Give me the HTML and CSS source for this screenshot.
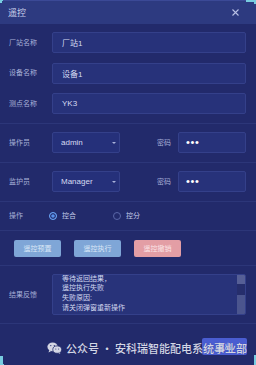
FILE: index.html
```html
<!DOCTYPE html>
<html lang="zh-CN">
<head>
<meta charset="utf-8">
<title>遥控</title>
<link rel="stylesheet" href="styles.css">
</head>
<body>
<div class="dialog">
  <div class="header">
    <span class="title">遥控</span>
    <svg class="close" width="7" height="7" viewBox="0 0 7 7"><path d="M0.5 0.5L6.5 6.5M6.5 0.5L0.5 6.5" stroke="#b9c0e4" stroke-width="1.1" fill="none"/></svg>
  </div>

  <div class="section basic">
    <div class="row"><span class="label">厂站名称</span><div class="input">厂站1</div></div>
    <div class="row"><span class="label">设备名称</span><div class="input">设备1</div></div>
    <div class="row"><span class="label">测点名称</span><div class="input">YK3</div></div>
  </div>

  <div class="section user">
    <span class="label">操作员</span>
    <div class="select">admin<span class="caret"></span></div>
    <span class="label pw-label">密码</span>
    <div class="input pw"><span class="dots">•••</span></div>
  </div>

  <div class="section user">
    <span class="label">监护员</span>
    <div class="select">Manager<span class="caret"></span></div>
    <span class="label pw-label">密码</span>
    <div class="input pw"><span class="dots">•••</span></div>
  </div>

  <div class="section op">
    <span class="label op-label">操作</span>
    <span class="radio checked"></span><span class="radio-text">控合</span>
    <span class="radio"></span><span class="radio-text">控分</span>
  </div>

  <div class="section actions">
    <button class="btn btn-blue">遥控预置</button>
    <button class="btn btn-blue">遥控执行</button>
    <button class="btn btn-red">遥控撤销</button>
  </div>

  <div class="section feedback">
    <span class="label">结果反馈</span>
    <div class="ta">
      <div class="ta-text">
        <div class="ta-lines">
          <p>等待返回结果，</p>
          <p>遥控执行失败</p>
          <p>失败原因:</p>
          <p>请关闭弹窗重新操作</p>
        </div>
      </div>
      <div class="sb"><i class="sb-up"></i><i class="sb-track"></i><i class="sb-thumb"></i></div>
    </div>
  </div>

  <div class="footer">
    <button class="btn btn-exit">退出</button>
  </div>

  <div class="watermark">
    <svg class="wx" width="15" height="12" viewBox="0 0 15 12">
      <ellipse cx="5.6" cy="4.8" rx="5.2" ry="4.4" fill="#d4d6e4"/>
      <path d="M2.2 8L1.6 10.4L4.2 9Z" fill="#d4d6e4"/>
      <ellipse cx="10.2" cy="7.6" rx="4.4" ry="3.7" fill="#d4d6e4" stroke="#262e6e" stroke-width="0.8"/>
      <path d="M12.6 10.6L13.4 12L11.4 11.1Z" fill="#d4d6e4"/>
      <circle cx="3.8" cy="3.6" r="0.65" fill="#262e6e"/>
      <circle cx="7.3" cy="3.6" r="0.65" fill="#262e6e"/>
      <circle cx="8.8" cy="7" r="0.5" fill="#262e6e"/>
      <circle cx="11.6" cy="7" r="0.5" fill="#262e6e"/>
    </svg>
    <span class="wm-text">公众号 · 安科瑞智能配电系统事业部</span>
  </div>

  <span class="corner tl"></span>
  <span class="corner tr"></span>
  <span class="corner bl"></span>
  <span class="corner br"></span>
</div>
</body>
</html>
```
FILE: styles.css
```css
* { box-sizing: border-box; margin: 0; padding: 0; }

body {
  margin: 0;
  width: 256px;
  height: 365px;
  overflow: hidden;
  background: #222a6b;
  font-family: "Liberation Sans", "Noto Sans CJK SC", sans-serif;
}

.dialog {
  position: relative;
  width: 256px;
  height: 365px;
  background: #222a6b;
  display: flex;
  flex-direction: column;
}

.header {
  height: 24px;
  flex: none;
  border-top: 1px solid #3b4996;
  background: #2d3a80;
  display: flex;
  align-items: center;
  justify-content: space-between;
  padding: 0 17px 0 8px;
}

.title {
  font-size: 9px;
  line-height: 12px;
  color: #c9cee9;
}

.close { display: block; }

.section {
  flex: none;
  border-bottom: 1px solid #2c3679;
  padding: 0 10px 0 9px;
}

.basic {
  padding-top: 8px;
  padding-bottom: 9px;
  display: flex;
  flex-direction: column;
  gap: 9.5px;
}

.row {
  display: flex;
  align-items: center;
}

.label {
  flex: none;
  width: 43px;
  font-size: 7px;
  line-height: 10px;
  color: #a8b0d8;
}

.input {
  flex: 1;
  height: 21px;
  background: #27327a;
  border: 1px solid #34408a;
  border-radius: 2px;
  padding-left: 9px;
  font-size: 8px;
  color: #d6dbf2;
  display: flex;
  align-items: center;
}

.user {
  display: flex;
  align-items: center;
  padding-top: 8px;
  padding-bottom: 9px;
}

.select {
  flex: none;
  width: 68px;
  height: 21px;
  background: #25307a;
  border: 1px solid #34408a;
  border-radius: 2px;
  padding: 0 3px 0 8px;
  font-size: 8px;
  color: #d6dbf2;
  display: flex;
  align-items: center;
}

.caret {
  margin-left: auto;
  width: 0;
  height: 0;
  border-left: 2.5px solid transparent;
  border-right: 2.5px solid transparent;
  border-top: 2.5px solid #aab2da;
}

.pw-label {
  width: 21px;
  margin-left: 37px;
}

.pw {
  flex: none;
  width: 68px;
  padding-left: 7px;
}

.dots {
  font-family: "Liberation Sans", sans-serif;
  font-size: 11px;
  line-height: 11px;
  letter-spacing: 0.6px;
  color: #ffffff;
}

.op {
  height: 29px;
  display: flex;
  align-items: center;
}

.op-label { width: 40px; }

.radio {
  flex: none;
  width: 8px;
  height: 8px;
  border-radius: 50%;
  border: 1px solid #5a67a8;
  margin-right: 5px;
}

.radio.checked {
  border-color: #6aa2f2;
  background: #5890ea;
  box-shadow: inset 0 0 0 1.2px #222a6b;
}

.radio-text {
  font-size: 7px;
  line-height: 10px;
  color: #c4cae8;
  width: 14px;
  margin-right: 37px;
}

.actions {
  display: flex;
  gap: 13px;
  padding: 9px 10px 8px 14px;
}

.btn {
  flex: none;
  width: 47px;
  height: 17px;
  border: none;
  border-radius: 2px;
  font-family: "Liberation Sans", "Noto Sans CJK SC", sans-serif;
  font-size: 7px;
  line-height: 10px;
  display: flex;
  align-items: center;
  justify-content: center;
}

.btn-blue {
  background: #7fa6d7;
  color: #d9e6f6;
}

.btn-red {
  background: #e39ea5;
  color: #fbe4e6;
}

.feedback {
  display: flex;
  align-items: center;
  padding-top: 8px;
  padding-bottom: 8px;
}

.ta {
  flex: 1;
  height: 41px;
  background: #28337a;
  border: 1px solid #34408a;
  border-radius: 2px;
  display: flex;
  overflow: hidden;
}

.ta-text {
  flex: 1;
  overflow: hidden;
  padding-left: 9px;
}

.ta-lines { margin-top: -1.5px; }

.ta-lines p {
  font-size: 7px;
  line-height: 9.8px;
  color: #d2d7ef;
  white-space: nowrap;
}

.sb {
  flex: none;
  width: 8px;
  display: flex;
  flex-direction: column;
}

.sb-up { display: block; height: 9px; background: #565f96; }
.sb-track { display: block; height: 11px; background: #262e6c; }
.sb-thumb { display: block; flex: 1; background: #4b558e; }

.footer {
  flex: 1;
  display: flex;
  justify-content: flex-end;
  align-items: flex-start;
  padding: 14px 9px 0 0;
}

.btn-exit {
  width: 45px;
  background: #4a5dd1;
  color: #e8ebfa;
}

.watermark {
  position: absolute;
  left: 47px;
  top: 341px;
  display: flex;
  align-items: center;
  gap: 4px;
}

.wx { display: block; }

.wm-text {
  font-family: "Noto Sans CJK SC", sans-serif;
  font-size: 11px;
  line-height: 14px;
  font-weight: 500;
  color: #d3d6e6;
  white-space: nowrap;
  text-shadow: 0 0 1px rgba(20, 24, 60, 0.4);
}

.corner {
  position: absolute;
  border-color: #78cce0;
  border-style: solid;
  border-width: 0;
}

.corner.tl { left: 0; top: 0; width: 3px; height: 3px; border-top-width: 1px; border-left-width: 2px; }
.corner.tr { right: 0; top: 0; width: 10px; height: 4px; border-top-width: 2px; border-right-width: 2px; }
.corner.bl { left: 0; bottom: 0; width: 4px; height: 9px; border-left-width: 3px; border-bottom-width: 1px; }
.corner.br { right: 0; bottom: 0; width: 3px; height: 10px; border-right-width: 2px; }
```
